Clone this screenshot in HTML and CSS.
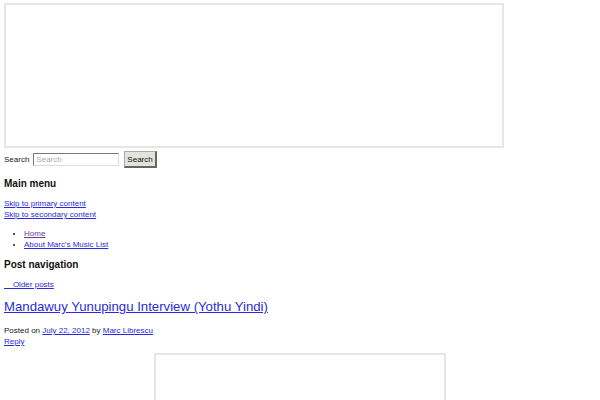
FILE: index.html
```html
<!DOCTYPE html>
<html lang="en">
<head>
  <meta charset="UTF-8" />
  <title>Marc's Music List</title>
  <link rel="stylesheet" href="styles.css">
</head>
<body>
  <div class="site-header"></div>

  <form class="search-form">
    <label for="s">Search</label>
    <input type="text" id="s" placeholder="Search" />
    <button type="submit">Search</button>
  </form>

  <nav class="main-nav">
    <h3>Main menu</h3>
    <div class="skip-links">
      <a href="#content">Skip to primary content</a>
      <a href="#secondary">Skip to secondary content</a>
    </div>
    <ul>
      <li><a class="visited" href="#">Home</a></li>
      <li><a href="#">About Marc's Music List</a></li>
    </ul>
  </nav>

  <nav class="post-nav">
    <h3>Post navigation</h3>
    <a href="#">&nbsp;&nbsp;&nbsp;&nbsp;Older posts</a>
  </nav>

  <article class="post">
    <h1><a href="#">Mandawuy Yunupingu Interview (Yothu Yindi)</a></h1>
    <div class="entry-meta">
      Posted on <a href="#">July 22, 2012</a> by <a href="#">Marc Librescu</a>
    </div>
    <a href="#">Reply</a>
    <div class="video-frame"></div>
  </article>
</body>
</html>
```

FILE: styles.css
```css
* {
  box-sizing: border-box;
}

body {
  margin: 0;
  padding: 3px 4px;
  font-family: "Liberation Sans", Arial, sans-serif;
  font-size: 8px;
  line-height: 11px;
  color: #222;
  background: #fff;
}

a {
  color: #2b2bdc;
}

a.visited {
  color: #6a3a9a;
}

.site-header {
  width: 500px;
  height: 145px;
  border: 2px solid #e6e6e6;
}

.search-form {
  display: flex;
  align-items: center;
  gap: 4px;
  height: 17px;
  margin-top: 3px;
}

.search-form label {
  font-size: 8px;
}

.search-form input {
  width: 86px;
  height: 13px;
  padding: 0 2px;
  border: 1px solid #777;
  border-right-color: #ddd;
  border-bottom-color: #ddd;
  font-family: inherit;
  font-size: 8px;
  margin: 0 1px 0 0;
}

.search-form input::placeholder {
  color: #aaa;
}

.search-form button {
  height: 17px;
  padding: 0 2px;
  border: 1px solid #aaa;
  border-right: 2px solid #666;
  border-bottom: 2px solid #666;
  background: #e4e2dc;
  font-family: inherit;
  font-size: 8px;
  color: #111;
}

h3 {
  margin: 0;
  font-size: 10px;
  line-height: 11px;
  font-weight: bold;
  color: #111;
}

.main-nav {
  margin-top: 10px;
}

.skip-links {
  display: flex;
  flex-direction: column;
  align-items: flex-start;
  margin-top: 9px;
}

.main-nav ul {
  margin: 8px 0 0;
  padding-left: 20px;
}

.post-nav {
  margin-top: 9px;
}

.post-nav a {
  display: inline-block;
  margin-top: 9px;
}

.post h1 {
  margin: 9px 0 0;
  font-size: 13.2px;
  line-height: 15px;
  font-weight: normal;
}

.entry-meta {
  margin-top: 11px;
}

.post > a {
  display: inline-block;
}

.video-frame {
  width: 292px;
  height: 160px;
  margin: 6px auto 0;
  border: 2px solid #e6e6e6;
}
```
